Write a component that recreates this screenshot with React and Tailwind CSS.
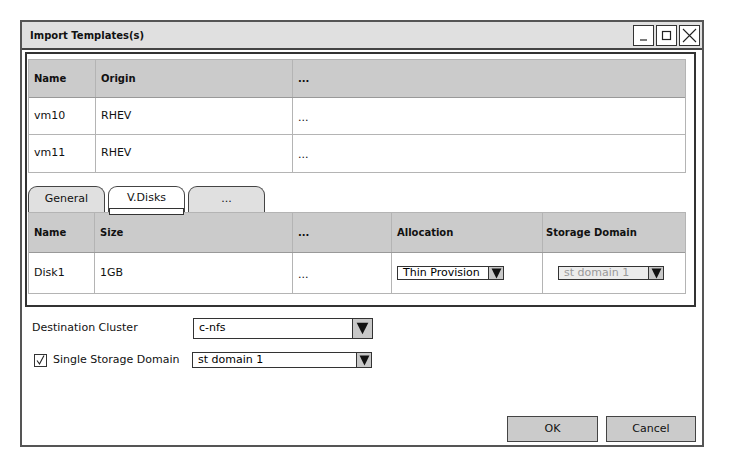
import React from 'react';

const font = { fontFamily: '"DejaVu Sans", "Noto Sans", sans-serif' };

function Arrow({ size }) {
  return (
    <span className="flex items-center justify-center self-stretch w-[15px] border-l border-[#333] bg-[#c8c8c8]">
      <svg width={size} height={size} viewBox="0 0 10 10">
        <path d="M0.5 0.5 L9.5 0.5 L5 9.5 Z" fill="#111" />
      </svg>
    </span>
  );
}

function Select({ value, className, disabled, arrow = 10, wide }) {
  return (
    <div className={`flex items-stretch border border-[#333] ${disabled ? 'bg-[#ececec]' : 'bg-white'} ${className}`}>
      <span className={`flex-1 flex items-center pl-[5px] truncate ${disabled ? 'text-[#999]' : 'text-black'}`}>{value}</span>
      {wide ? (
        <span className="flex items-center justify-center self-stretch w-[20px] border-l border-[#333] bg-[#c8c8c8]">
          <svg width="13" height="13" viewBox="0 0 10 10">
            <path d="M0.5 0.5 L9.5 0.5 L5 9.5 Z" fill="#111" />
          </svg>
        </span>
      ) : (
        <Arrow size={arrow} />
      )}
    </div>
  );
}

function WinBtn({ children }) {
  return (
    <div className="w-[21px] h-[21px] border border-[#333] bg-white flex items-center justify-center">
      {children}
    </div>
  );
}

const cell = 'flex items-center px-[5px] border-r border-[#b4b4b4]';

export default function App() {
  return (
    <div className="w-[729px] h-[468px] bg-white pt-[20px] pl-[20px] text-[11px] text-[#111]" style={font}>
      <div className="w-[684px] h-[427px] border-2 border-[#555] flex flex-col bg-white">
        {/* title bar */}
        <div className="h-[28px] bg-[#e0e0e0] border-b-2 border-[#444] flex items-center justify-between pl-[8px] pr-[2px]">
          <span className="font-bold text-[10px]">Import Templates(s)</span>
          <div className="flex gap-[2px]">
            <WinBtn>
              <svg width="13" height="13" viewBox="0 0 13 13"><path d="M3 11 H10" stroke="#222" strokeWidth="1.2" /></svg>
            </WinBtn>
            <WinBtn>
              <svg width="13" height="13" viewBox="0 0 13 13"><rect x="2.5" y="2.5" width="8" height="8" fill="none" stroke="#222" strokeWidth="1.2" /></svg>
            </WinBtn>
            <WinBtn>
              <svg width="15" height="15" viewBox="0 0 15 15"><path d="M1 1 L14 14 M14 1 L1 14" stroke="#222" strokeWidth="1.1" /></svg>
            </WinBtn>
          </div>
        </div>

        {/* inner panel */}
        <div className="ml-[3px] mt-[2px] w-[671px] h-[255px] border-2 border-[#333] pl-[1px] pt-[5px]">
          {/* table 1 */}
          <div className="w-[658px] border border-[#b4b4b4]">
            <div className="flex h-[38px] bg-[#cbcbcb] border-b border-[#999] font-bold text-[10px]">
              <div className={`${cell} w-[67px]`}>Name</div>
              <div className={`${cell} w-[197px]`}>Origin</div>
              <div className="flex items-center px-[5px] flex-1">...</div>
            </div>
            {[['vm10', 'RHEV'], ['vm11', 'RHEV']].map(([n, o], i) => (
              <div key={n} className={`flex h-[37px] ${i === 0 ? 'border-b border-[#b4b4b4]' : ''}`}>
                <div className={`${cell} w-[67px]`}>{n}</div>
                <div className={`${cell} w-[197px]`}>{o}</div>
                <div className="flex items-center px-[5px] flex-1 pt-[4px]">...</div>
              </div>
            ))}
          </div>

          {/* tabs */}
          <div className="relative flex gap-[3px] mt-[12px] h-[27px] items-end">
            <div className="w-[77px] h-[26px] rounded-t-[9px] border border-[#444] border-b-0 bg-[#e0e0e0] flex items-center justify-center">General</div>
            <div className="w-[77px] h-[26px] rounded-t-[9px] border border-[#444] border-b-0 bg-white flex items-center justify-center pb-[3px]">V.Disks</div>
            <div className="w-[77px] h-[26px] rounded-t-[9px] border border-[#444] border-b-0 bg-[#e0e0e0] flex items-center justify-center">...</div>
            <div className="absolute left-[81px] top-[23px] w-[75px] h-[7px] border border-[#333] bg-white z-10" />
          </div>

          {/* table 2 */}
          <div className="w-[658px] border border-[#b4b4b4]">
            <div className="flex h-[40px] bg-[#cbcbcb] border-b border-[#999] font-bold text-[10px]">
              <div className={`${cell} w-[66px]`}>Name</div>
              <div className={`${cell} w-[198px]`}>Size</div>
              <div className={`${cell} w-[99px]`}>...</div>
              <div className={`${cell} w-[151px]`}>Allocation</div>
              <div className="flex items-center px-[3px] flex-1">Storage Domain</div>
            </div>
            <div className="flex h-[40px]">
              <div className={`${cell} w-[66px]`}>Disk1</div>
              <div className={`${cell} w-[198px]`}>1GB</div>
              <div className={`${cell} w-[99px] pt-[4px]`}>...</div>
              <div className={`${cell} w-[151px]`}>
                <Select value="Thin Provision" className="w-[107px] h-[14px]" arrow={11} />
              </div>
              <div className="flex items-center flex-1 pl-[15px]">
                <Select value="st domain 1" disabled className="w-[106px] h-[14px]" arrow={11} />
              </div>
            </div>
          </div>
        </div>

        {/* form */}
        <div className="flex flex-col gap-[13px] mt-[11px] pl-[10px]">
          <div className="flex items-center">
            <span className="w-[161px]">Destination Cluster</span>
            <Select value="c-nfs" className="w-[180px] h-[21px]" wide />
          </div>
          <div className="flex items-center">
            <div className="w-[160px] flex items-center">
              <span className="w-[13px] h-[13px] border border-[#333] ml-[2px] mr-[6px] flex items-center justify-center">
                <svg width="11" height="11" viewBox="0 0 11 11"><path d="M2 5.5 L4.5 9 L9 0.5" fill="none" stroke="#222" strokeWidth="1.1" /></svg>
              </span>
              <span>Single Storage Domain</span>
            </div>
            <Select value="st domain 1" className="w-[180px] h-[16px]" arrow={11} />
          </div>
        </div>

        {/* buttons */}
        <div className="mt-auto mb-[3px] flex justify-end gap-[8px] pr-[6px]">
          <button className="w-[91px] h-[26px] bg-[#cbcbcb] border border-[#444]">OK</button>
          <button className="w-[90px] h-[26px] bg-[#cbcbcb] border border-[#444]">Cancel</button>
        </div>
      </div>
    </div>
  );
}
